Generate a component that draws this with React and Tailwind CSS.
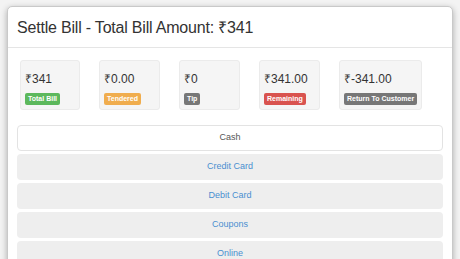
import React from "react";

const cards = [
  { amt: "₹341", label: "Total Bill", color: "bg-[#5cb85c]", w: "w-[60px]" },
  { amt: "₹0.00", label: "Tendered", color: "bg-[#f0ad4e]", w: "w-[61px]" },
  { amt: "₹0", label: "Tip", color: "bg-[#777777]", w: "w-[61px]" },
  { amt: "₹341.00", label: "Remaining", color: "bg-[#d9534f]", w: "w-[61px]" },
  { amt: "₹-341.00", label: "Return To Customer", color: "bg-[#777777]", w: "w-[83px]" },
];

const methods = ["Credit Card", "Debit Card", "Coupons", "Online"];

export default function App() {
  return (
    <div className="w-[460px] h-[259px] overflow-hidden bg-[#f3f3f3] pt-[6px] pl-[7px] font-['Liberation_Sans',Arial,sans-serif]">
      <div className="w-[446px] h-[300px] bg-white border border-[#c9c9c9] rounded-[5px] shadow-[0_2px_6px_rgba(0,0,0,0.3)]">
        <div className="h-[41px] border-b border-[#e5e5e5] flex items-center px-[9px]">
          <h1 className="text-[16px] tracking-[-0.2px] text-[#333] leading-none mt-[2px]">Settle Bill - Total Bill Amount: ₹341</h1>
        </div>
        <div className="px-[9px] pt-[12px]">
          <div className="flex gap-[19px] pl-[3px]">
            {cards.map((c) => (
              <div
                key={c.label}
                className={`${c.w} h-[50px] bg-[#f5f5f5] border border-[#ebebeb] rounded-[3px] pl-[4px] pt-[12px] flex flex-col items-start`}
              >
                <div className="text-[12px] leading-none text-[#333]">{c.amt}</div>
                <span
                  className={`${c.color} mt-[8px] block text-white font-bold text-[7px] leading-[12px] px-[3px] rounded-[2px]`}
                >
                  {c.label}
                </span>
              </div>
            ))}
          </div>
          <div className="mt-[15px] flex flex-col gap-[3px]">
            <div className="h-[26px] bg-white border border-[#e3e3e3] rounded-[4px] flex items-center justify-center text-[9px] text-[#555]">
              Cash
            </div>
            {methods.map((m) => (
              <div
                key={m}
                className="h-[26px] bg-[#eeeeee] rounded-[4px] flex items-center justify-center text-[9px] text-[#4a8fd0]"
              >
                {m}
              </div>
            ))}
          </div>
        </div>
      </div>
    </div>
  );
}
